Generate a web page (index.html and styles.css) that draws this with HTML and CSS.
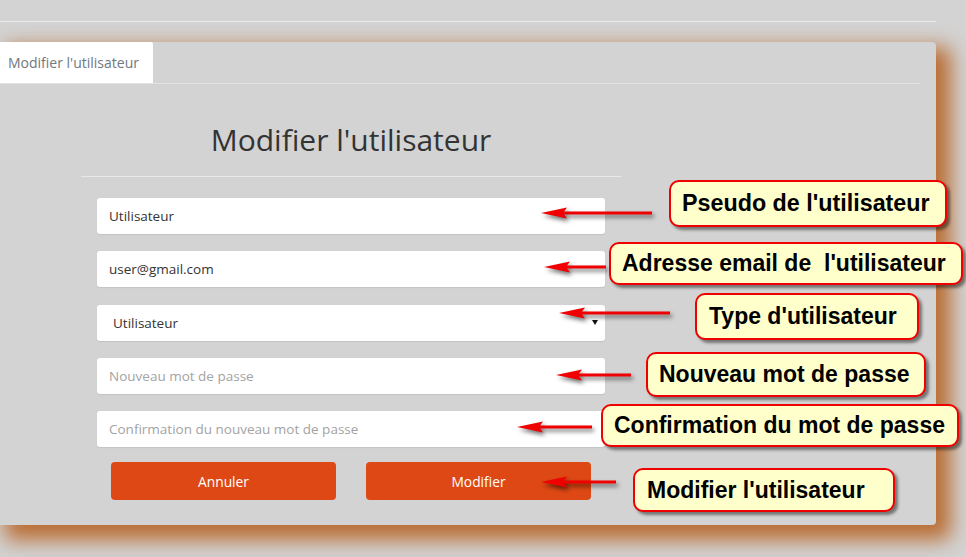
FILE: index.html
```html
<!DOCTYPE html>
<html lang="fr">
<head>
<meta charset="utf-8">
<title>Modifier l'utilisateur</title>
<link rel="stylesheet" href="styles.css">
</head>
<body>
<div class="page">
  <div class="topline"></div>
  <div class="card">
    <div class="tabs">
      <div class="tab">Modifier l'utilisateur</div>
    </div>
    <div class="form-col">
      <h1 class="title">Modifier l'utilisateur</h1>
      <div class="sep"></div>
      <form class="form">
        <input class="field" type="text" value="Utilisateur">
        <input class="field" type="email" value="user@gmail.com">
        <div class="select-wrap">
          <select class="field select"><option>Utilisateur</option></select>
        </div>
        <input class="field" type="password" placeholder="Nouveau mot de passe">
        <input class="field" type="password" placeholder="Confirmation du nouveau mot de passe">
        <div class="actions">
          <button type="button" class="btn">Annuler</button>
          <button type="button" class="btn">Modifier</button>
        </div>
      </form>
    </div>
  </div>
</div>

<div class="callout c1">Pseudo de l'utilisateur</div>
<div class="callout c2">Adresse email de  l'utilisateur</div>
<div class="callout c3">Type d'utilisateur</div>
<div class="callout c4">Nouveau mot de passe</div>
<div class="callout c5">Confirmation du mot de passe</div>
<div class="callout c6">Modifier l'utilisateur</div>

<svg class="arrow a1" width="114" height="16" viewBox="0 0 114 16"><line x1="22" y1="8" x2="112" y2="8"/><polygon points="1,8 27,2.5 23,8 27,13.5"/></svg>
<svg class="arrow a2" width="65" height="16" viewBox="0 0 65 16"><line x1="22" y1="8" x2="63" y2="8"/><polygon points="1,8 27,2.5 23,8 27,13.5"/></svg>
<svg class="arrow a3" width="114" height="16" viewBox="0 0 114 16"><line x1="22" y1="8" x2="112" y2="8"/><polygon points="1,8 27,2.5 23,8 27,13.5"/></svg>
<svg class="arrow a4" width="78" height="16" viewBox="0 0 78 16"><line x1="22" y1="8" x2="76" y2="8"/><polygon points="1,8 27,2.5 23,8 27,13.5"/></svg>
<svg class="arrow a5" width="78" height="16" viewBox="0 0 78 16"><line x1="22" y1="8" x2="76" y2="8"/><polygon points="1,8 27,2.5 23,8 27,13.5"/></svg>
<svg class="arrow a6" width="78" height="16" viewBox="0 0 78 16"><line x1="22" y1="8" x2="76" y2="8"/><polygon points="1,8 27,2.5 23,8 27,13.5"/></svg>
</body>
</html>
```

FILE: styles.css
```css
* { box-sizing: border-box; }
html, body { margin: 0; padding: 0; }
body {
  background: #d3d3d3;
  font-family: "Open Sans", "DejaVu Sans", sans-serif;
  overflow: hidden;
  width: 966px;
  height: 557px;
}
.page {
  width: 936px;
  padding-top: 21px;
}
.topline {
  height: 1px;
  background: #ececec;
}
.card {
  margin-top: 20px;
  height: 483px;
  background: #d3d3d3;
  border-radius: 0 4px 4px 0;
  padding-right: 16px;
  box-shadow: 10px 10px 20px 5px rgba(184, 104, 44, 0.95);
}
.tabs {
  display: flex;
  border-bottom: 1px solid #e3e3e3;
}
.tab {
  width: 153px;
  height: 41px;
  background: #fff;
  border-top-right-radius: 2px;
  color: #6f7780;
  font-size: 14px;
  padding-left: 8px;
  display: flex;
  align-items: center;
}
.form-col {
  width: 540px;
  margin-left: 81px;
}
.title {
  margin: 0;
  padding-top: 36px;
  height: 92px;
  text-align: center;
  font-weight: 400;
  font-size: 30px;
  line-height: 40px;
  color: #333;
}
.sep {
  height: 1px;
  background: #e8e8e8;
}
.form {
  padding: 21px 16px 0;
  display: flex;
  flex-direction: column;
  gap: 17.3px;
}
.field {
  display: block;
  width: 100%;
  height: 36px;
  border: 0;
  border-radius: 3px;
  background: #fff;
  box-shadow: 0 1px 1px rgba(0, 0, 0, 0.08);
  padding: 0 12px;
  font-family: "Open Sans", "DejaVu Sans", sans-serif;
  font-size: 13.5px;
  color: #333;
  outline: none;
}
.field::placeholder { color: #a3a3a3; }
.select-wrap { position: relative; }
.select {
  appearance: none;
  -webkit-appearance: none;
  padding-left: 16px;
}
.select-wrap::after {
  content: "";
  position: absolute;
  right: 7px;
  top: 15px;
  border-left: 3px solid transparent;
  border-right: 3px solid transparent;
  border-top: 5px solid #111;
}
.actions {
  display: flex;
  justify-content: center;
  gap: 30px;
  margin-top: -2px;
}
.btn {
  width: 225px;
  height: 38px;
  border: 0;
  border-radius: 4px;
  background: #dd4814;
  color: #fff;
  font-family: "Open Sans", "DejaVu Sans", sans-serif;
  font-size: 13.8px;
}

/* annotation callouts (overlay) */
.callout {
  position: absolute;
  display: flex;
  align-items: center;
  padding-left: 11px;
  background: #ffffcc;
  border: 2px solid #f00000;
  border-radius: 10px;
  box-shadow: 3px 3px 3px rgba(0, 0, 0, 0.45);
  font-family: "Liberation Sans", Arial, sans-serif;
  font-weight: bold;
  font-size: 23px;
  color: #000;
  white-space: pre;
}
.c1 { left: 669px; top: 180px; width: 278px; height: 47px; font-size: 23.3px; }
.c2 { left: 609px; top: 242px; width: 354px; height: 43px; }
.c3 { left: 695px; top: 293px; width: 224px; height: 47px; padding-left: 12px; }
.c4 { left: 646px; top: 352px; width: 280px; height: 45px; }
.c5 { left: 601px; top: 404px; width: 358px; height: 43px; }
.c6 { left: 633px; top: 468px; width: 262px; height: 44px; padding-left: 12px; }

/* annotation arrows (overlay) */
.arrow {
  position: absolute;
  overflow: visible;
  filter: drop-shadow(2px 3px 2px rgba(0, 0, 0, 0.55));
}
.arrow line { stroke: #f00000; stroke-width: 3; }
.arrow polygon { fill: #f00000; }
.a1 { left: 540px; top: 205px; }
.a2 { left: 543px; top: 259px; }
.a3 { left: 558px; top: 305px; }
.a4 { left: 555px; top: 367px; }
.a5 { left: 516px; top: 419px; }
.a6 { left: 540px; top: 474px; }
```
